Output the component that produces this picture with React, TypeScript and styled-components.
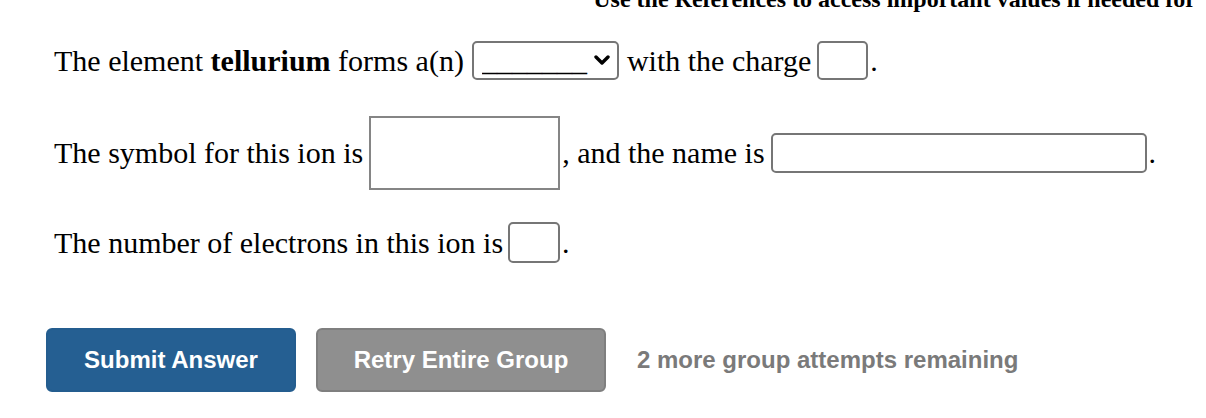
import React from "react";
import styled, { createGlobalStyle } from "styled-components";

const Global = createGlobalStyle`
  html, body { margin: 0; padding: 0; background: #ffffff; }
  body { font-family: "Liberation Serif", "Times New Roman", serif; color: #000; }
`;

const Page = styled.div`
  width: 1206px;
  height: 418px;
  overflow: hidden;
  display: flex;
  flex-direction: column;
`;

const Note = styled.div`
  margin-top: -13px;
  height: 24px;
  line-height: 24px;
  font-size: 24px;
  font-weight: bold;
  text-align: right;
  padding-right: 10px;
  white-space: nowrap;
`;

const Body = styled.div`
  display: flex;
  flex-direction: column;
  padding-left: 54px;
`;

const Row = styled.div<{ $top: number; $h: number }>`
  display: flex;
  align-items: center;
  margin-top: ${(p) => p.$top}px;
  height: ${(p) => p.$h}px;
  font-size: 30px;
  white-space: nowrap;
`;

const Text = styled.span<{ $ml?: number; $mr?: number }>`
  margin-left: ${(p) => p.$ml ?? 0}px;
  margin-right: ${(p) => p.$mr ?? 0}px;
`;

const SelectWrap = styled.div`
  position: relative;
  width: 147px;
  height: 39px;
`;

const Select = styled.select`
  appearance: none;
  -webkit-appearance: none;
  width: 100%;
  height: 100%;
  box-sizing: border-box;
  border: 2px solid #767676;
  border-radius: 5px;
  background: #fff;
  font-family: "Liberation Serif", "Times New Roman", serif;
  font-size: 30px;
  color: #000;
  padding: 0 0 0 8px;
  line-height: 34px;
  outline: none;
`;

const Chevron = styled.svg`
  position: absolute;
  right: 9px;
  top: 13px;
  pointer-events: none;
`;

const Field = styled.input<{ $w: number; $h: number; $square?: boolean }>`
  width: ${(p) => p.$w}px;
  height: ${(p) => p.$h}px;
  box-sizing: border-box;
  border: 2px solid ${(p) => (p.$square ? "#858585" : "#767676")};
  border-radius: ${(p) => (p.$square ? 0 : 5)}px;
  background: #fff;
  padding: 0 4px;
  font-family: "Liberation Serif", "Times New Roman", serif;
  font-size: 26px;
  outline: none;
`;

const Actions = styled.div`
  display: flex;
  align-items: center;
  margin-top: 65px;
  padding-left: 46px;
  font-family: "Liberation Sans", Arial, sans-serif;
`;

const Button = styled.button<{ $variant: "primary" | "muted"; $w: number }>`
  width: ${(p) => p.$w}px;
  height: 64px;
  box-sizing: border-box;
  border-radius: 6px;
  border: 2px solid ${(p) => (p.$variant === "primary" ? "#245d8f" : "#7f7f7f")};
  background: ${(p) => (p.$variant === "primary" ? "#255f92" : "#8f8f8f")};
  color: #ffffff;
  font-family: "Liberation Sans", Arial, sans-serif;
  font-weight: bold;
  font-size: 24px;
  padding: 0;
  margin-right: 20px;
  cursor: pointer;
`;

const Status = styled.span`
  margin-left: 11px;
  color: #7a7a7a;
  font-weight: bold;
  font-size: 24px;
`;

export default function App() {
  return (
    <>
      <Global />
      <Page>
        <Note>Use the References to access important values if needed for</Note>
        <Body>
          <Row $top={30} $h={39}>
            <Text $mr={8}>
              The element <b>tellurium</b> forms a(n)
            </Text>
            <SelectWrap>
              <Select defaultValue="blank">
                <option value="blank">_______</option>
                <option value="cation">cation</option>
                <option value="anion">anion</option>
              </Select>
              <Chevron width="16" height="12" viewBox="0 0 16 12">
                <polyline
                  points="2,3 8,9 14,3"
                  fill="none"
                  stroke="#000"
                  strokeWidth="3.4"
                  strokeLinecap="round"
                  strokeLinejoin="round"
                />
              </Chevron>
            </SelectWrap>
            <Text $ml={8} $mr={6}>with the charge</Text>
            <Field $w={51} $h={39} />
            <Text $ml={2}>.</Text>
          </Row>
          <Row $top={36} $h={74}>
            <Text $mr={6}>The symbol for this ion is</Text>
            <Field $w={191} $h={74} $square />
            <Text $ml={2} $mr={6}>, and the name is</Text>
            <Field $w={376} $h={40} />
            <Text $ml={2}>.</Text>
          </Row>
          <Row $top={32} $h={41}>
            <Text $mr={5}>The number of electrons in this ion is</Text>
            <Field $w={52} $h={41} />
            <Text $ml={2}>.</Text>
          </Row>
        </Body>
        <Actions>
          <Button $variant="primary" $w={250}>Submit Answer</Button>
          <Button $variant="muted" $w={290}>Retry Entire Group</Button>
          <Status>2 more group attempts remaining</Status>
        </Actions>
      </Page>
    </>
  );
}
